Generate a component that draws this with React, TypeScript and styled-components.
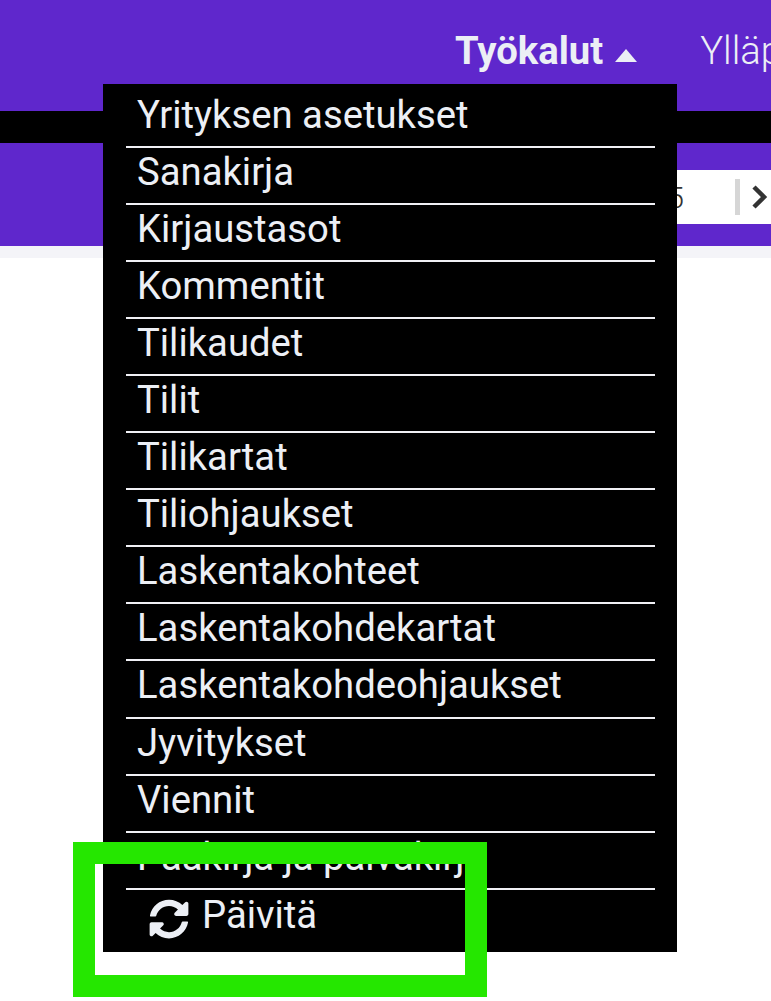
import React from 'react';
import styled, { createGlobalStyle } from 'styled-components';

const GlobalStyle = createGlobalStyle`
    html, body {
        margin: 0;
        padding: 0;
        background-color: rgb(255, 255, 255);
        font-family: Roboto, "Liberation Sans", sans-serif;
    }
`;

const Page = styled('div')`
    position: relative;
    width: 771px;
    height: 1001px;
    overflow: hidden;
`;

const NavBar = styled('nav')`
    background-color: rgb(95, 39, 204);
    color: rgb(236, 239, 245);
    height: 111px;
    display: flex;
    padding-left: 455px;
    gap: 63px;
    white-space: nowrap;
`;

const NavItem = styled('div')<{ $active?: boolean }>`
    display: flex;
    align-items: center;
    gap: 12px;
    height: 101px;
    font-size: 38.25px;
    font-weight: ${(props) => (props.$active ? 700 : 300)};
`;

const Caret = styled('span')`
    width: 0;
    height: 0;
    margin-top: 10px;
    border-left: 11.5px solid transparent;
    border-right: 11.5px solid transparent;
    border-bottom: 13px solid rgb(236, 239, 245);
`;

const BlackStrip = styled('div')`
    background-color: rgb(0, 0, 0);
    height: 32px;
`;

const SubBar = styled('div')`
    background-color: rgb(95, 39, 204);
    height: 103px;
    padding-top: 27px;
    box-sizing: border-box;
    display: flex;
    justify-content: flex-end;
`;

const Pager = styled('div')`
    background-color: rgb(255, 255, 255);
    height: 54px;
    width: 200px;
    display: flex;
    align-items: center;
    justify-content: flex-end;
    color: rgb(51, 51, 51);
    font-size: 30px;
`;

const PagerNumber = styled('span')`
    margin-right: 51px;
    font-weight: 300;
`;

const PagerDivider = styled('span')`
    width: 5px;
    height: 36px;
    background-color: rgb(214, 214, 214);
    margin-right: 11px;
`;

const PagerArrow = styled('svg')`
    width: 20px;
    height: 30px;
    display: block;
`;

const GreyBand = styled('div')`
    background-color: rgb(244, 244, 248);
    height: 12px;
`;

const Dropdown = styled('ul')`
    position: absolute;
    top: 84px;
    left: 103px;
    width: 574px;
    height: 868px;
    box-sizing: border-box;
    margin: 0;
    padding: 7px 22px 0 23px;
    list-style: none;
    background-color: rgb(0, 0, 0);
    color: rgb(236, 239, 245);
`;

const DropdownItem = styled('li')`
    height: 57.05px;
    box-sizing: border-box;
    border-bottom: 2px solid rgb(240, 240, 245);
    padding: 3px 0 0 11px;
    font-size: 38.25px;
    line-height: 42px;
    white-space: nowrap;

    &:last-child {
        border-bottom: none;
    }
`;

const RefreshRow = styled('span')`
    display: flex;
    align-items: flex-start;
    gap: 13px;
    padding-left: 12px;
    line-height: 38px;
`;

const RefreshIcon = styled('svg')`
    width: 40px;
    height: 40px;
    display: block;
    margin-top: 6px;
`;

const RefreshLabel = styled('span')`
    margin-top: 3px;
`;

const Highlight = styled('div')`
    position: absolute;
    top: 842px;
    left: 73px;
    width: 414px;
    height: 155px;
    box-sizing: border-box;
    border: 22px solid rgb(37, 231, 0);
`;

const menuItems = [
    'Yrityksen asetukset',
    'Sanakirja',
    'Kirjaustasot',
    'Kommentit',
    'Tilikaudet',
    'Tilit',
    'Tilikartat',
    'Tiliohjaukset',
    'Laskentakohteet',
    'Laskentakohdekartat',
    'Laskentakohdeohjaukset',
    'Jyvitykset',
    'Viennit',
    'Pääkirja ja päiväkirja'
];

export default function App() {
    return (
        <Page>
            <GlobalStyle />
            <NavBar>
                <NavItem $active>
                    Työkalut
                    <Caret />
                </NavItem>
                <NavItem>Ylläpito</NavItem>
            </NavBar>
            <BlackStrip />
            <SubBar>
                <Pager>
                    <PagerNumber>5</PagerNumber>
                    <PagerDivider />
                    <PagerArrow viewBox="0 0 20 30">
                        <path
                            d="M3 5 L13 15 L3 25"
                            fill="none"
                            stroke="rgb(51, 51, 51)"
                            strokeWidth="4.5"
                        />
                    </PagerArrow>
                </Pager>
            </SubBar>
            <GreyBand />
            <Dropdown>
                {menuItems.map((item) => (
                    <DropdownItem key={item}>{item}</DropdownItem>
                ))}
                <DropdownItem>
                    <RefreshRow>
                        <RefreshIcon viewBox="0 0 512 512">
                            <path
                                fill="rgb(236, 239, 245)"
                                d="M370.72 133.28C339.458 104.008 298.888 87.962 255.848 88c-77.458.068-144.328 53.178-162.791 126.85-1.344 5.363-6.122 9.15-11.651 9.15H24.103c-7.498 0-13.194-6.807-11.807-14.176C33.933 94.924 134.813 8 256 8c66.448 0 126.791 26.136 171.315 68.685L463.03 40.97C478.149 25.851 504 36.559 504 57.941V192c0 13.255-10.745 24-24 24H345.941c-21.382 0-32.09-25.851-16.971-40.971l41.75-41.749zM32 296h134.059c21.382 0 32.09 25.851 16.971 40.971l-41.75 41.75c31.262 29.273 71.835 45.319 114.876 45.28 77.418-.07 144.315-53.144 162.787-126.849 1.344-5.363 6.122-9.15 11.651-9.15h57.304c7.498 0 13.194 6.807 11.807 14.176C478.067 417.076 377.187 504 256 504c-66.448 0-126.791-26.136-171.315-68.685L48.97 471.03C33.851 486.149 8 475.441 8 454.059V320c0-13.255 10.745-24 24-24z"
                            />
                        </RefreshIcon>
                        <RefreshLabel>Päivitä</RefreshLabel>
                    </RefreshRow>
                </DropdownItem>
            </Dropdown>
            <Highlight />
        </Page>
    );
}
